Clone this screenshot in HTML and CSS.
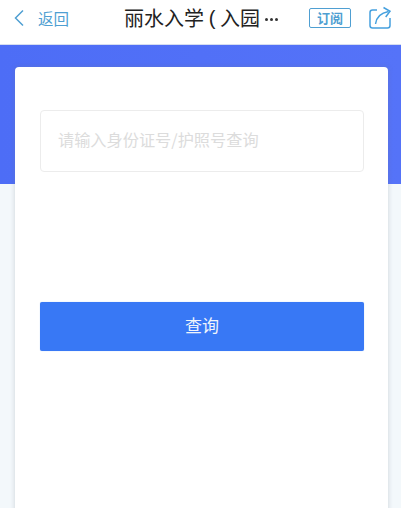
FILE: index.html
```html
<!DOCTYPE html>
<html lang="zh">
<head>
<meta charset="utf-8">
<title>丽水入学</title>
<link rel="stylesheet" href="styles.css">
</head>
<body>
<header class="nav">
  <div class="back">
    <svg class="chev" width="12" height="18" viewBox="0 0 12 18"><path d="M10 1.500 2.500 9l7.500 7.500" fill="none" stroke="#4f9fd2" stroke-width="1.500"/></svg>
    <span class="back-text">返回</span>
  </div>
  <div class="title"><span>丽水入学</span><span class="paren">(</span><span>入园</span><span class="dots"><i></i><i></i><i></i></span></div>
  <div class="actions">
    <span class="sub">订阅</span>
    <svg class="share" width="24" height="24" viewBox="0 0 24 24"><path d="M9 4H4.500Q2 4 2 6.500v13Q2 22 4.500 22h15q2.500 0 2.500-2.500V12" fill="none" stroke="#45a0de" stroke-width="1.500"/><path d="M7.500 18c.8-6 4.500-11 13-12.500" fill="none" stroke="#45a0de" stroke-width="1.500"/><path d="M15.500 1.500 22 5.300l-4.300 5.700" fill="none" stroke="#45a0de" stroke-width="1.500"/></svg>
  </div>
</header>
<main class="page">
  <div class="hero"></div>
  <section class="card">
    <div class="field">请输入身份证号/护照号查询</div>
    <button class="btn">查询</button>
  </section>
</main>
</body>
</html>
```
FILE: styles.css
```css
* { box-sizing: border-box; }
html, body { margin: 0; height: 100%; overflow: hidden; }
body {
  width: 401px;
  height: 508px;
  background: #f3f8fb;
  font-family: "Noto Sans CJK SC", "Noto Sans", sans-serif;
}
.nav {
  height: 45px;
  background: #fff;
  border-bottom: 1px solid #d5ddf0;
  display: flex;
  align-items: center;
  position: relative;
  padding: 0 9px 8px 13px;
}
.back { display: flex; align-items: center; gap: 13px; }
.back-text { font-size: 15.500px; color: #4f9fd2; line-height: 20px; }
.chev { display: block; }
.title {
  position: absolute;
  left: 124px;
  top: 4px;
  font-size: 20px;
  line-height: 28px;
  color: #222;
  white-space: nowrap;
  display: flex;
  align-items: center;
}
.title .paren { width: 16px; text-align: center; font-family: "Liberation Sans", sans-serif; font-size: 20px; }
.dots { display: flex; gap: 2px; margin-left: 5px; margin-top: 2px; }
.dots i { width: 3px; height: 3px; border-radius: 50%; background: #333; }
.actions { margin-left: auto; display: flex; align-items: center; gap: 17px; }
.sub {
  width: 42px;
  height: 20px;
  border: 1.500px solid #4f9fd2;
  border-radius: 2px;
  color: #4f9fd2;
  font-size: 13px;
  font-weight: 700;
  line-height: 17px;
  text-align: center;
}
.share { display: block; }
.page { position: relative; height: 463px; overflow: hidden; }
.hero {
  height: 139px;
  background: linear-gradient(90deg, #4d6df6, #5573f8);
}
.card {
  position: absolute;
  left: 15px;
  top: 22px;
  width: 373px;
  height: 460px;
  background: #fff;
  border-radius: 4px;
  box-shadow: 0 0 5px rgba(110, 120, 140, .3);
  padding: 43px 24px 0 25px;
}
.field {
  height: 62px;
  border: 1px solid #ececec;
  border-radius: 4px;
  padding-left: 17px;
  font-size: 16.200px;
  line-height: 57px;
  color: #dcdcdc;
}
.btn {
  display: block;
  width: 100%;
  height: 49px;
  margin-top: 130px;
  border: 0;
  border-radius: 2px;
  background: #3878f5;
  box-shadow: 0 0 1px #9cc4ee;
  color: #f0f4fb;
  font: 17px/24px "Noto Sans CJK SC", "Noto Sans", sans-serif;
  padding: 0 0 4px;
}
```
